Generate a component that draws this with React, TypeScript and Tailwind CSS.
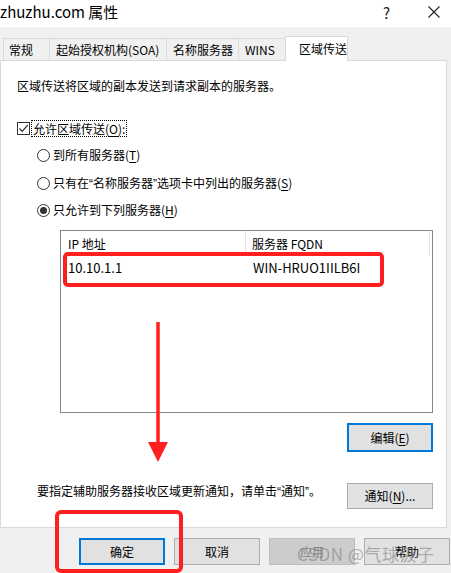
import { FC, ReactNode } from 'react';

const font = { fontFamily: '"Noto Sans CJK SC", "Noto Sans", sans-serif' };
const latin = { fontFamily: '"Liberation Sans", sans-serif' };

const Key: FC<{ k: string }> = ({ k }) => <span className="underline underline-offset-2">{k}</span>;

const Q: FC<{ c: string }> = ({ c }) => <span style={latin}>{c}</span>;

const Radio: FC<{ checked?: boolean; children: ReactNode }> = ({ checked, children }) => {
  return <div className="flex items-center h-[16px] ml-[36px]">
    <div className="w-[13px] h-[13px] rounded-full border border-[#333] bg-white flex items-center justify-center">
      {checked && <div className="w-[7px] h-[7px] rounded-full bg-[#333]" />}
    </div>
    <div className="ml-[3px] leading-[16px]">{children}</div>
  </div>;
};

const Btn: FC<{ children: ReactNode; primary?: boolean; disabled?: boolean; className?: string }> = props => {
  const { children, primary, disabled, className } = props;
  let cls = 'border border-[#adadad] bg-[#e1e1e1] text-black';
  if (primary) cls = 'border-2 border-[#0078d7] bg-[#e1e1e1] text-black';
  if (disabled) cls = 'border border-[#bfbfbf] bg-[#cccccc] text-[#838383]';
  return <div className={`flex items-center justify-center w-[86px] text-[12px] ${cls} ${className ?? ''}`}>{children}</div>;
};

const tabs = [
  { label: '常规', w: 'w-[46px]' },
  { label: '起始授权机构(SOA)', w: 'w-[117px]' },
  { label: '名称服务器', w: 'w-[72px]' },
  { label: 'WINS', w: 'w-[47px]' },
];

const App: FC = () => {
  return <div className="relative w-[451px] h-[573px] overflow-hidden bg-[#f0f0f0] text-[12px] text-black" style={font}>
    {/* title bar */}
    <div className="h-[27px] bg-white flex items-center relative">
      <div className="text-[15px] leading-[20px] -mt-[3px]">zhuzhu.com 属性</div>
      <div className="absolute left-[383px] top-[2px] text-[15px] text-[#222]">?</div>
      <svg className="absolute left-[428px] top-[6px]" width="12" height="12" viewBox="0 0 12 12">
        <path d="M0.5 0.5 L11.5 11.5 M11.5 0.5 L0.5 11.5" stroke="#222" strokeWidth="1.1" />
      </svg>
    </div>

    {/* tabs */}
    <div className="flex items-end h-[33px] pl-[3px]">
      {tabs.map((t, i) => {
        return <div key={i} className={`${t.w} h-[22px] border-t border-l border-[#d9d9d9] flex items-center leading-[16px] ${i == 0 ? 'pl-[5px]' : 'pl-[6px]'}`}>{t.label}</div>;
      })}
      <div className="w-[63px] h-[25px] -mb-[1px] bg-white border-t border-l border-r border-[#d9d9d9] flex items-center pl-[13px] leading-[16px] relative z-10">区域传送</div>
    </div>

    {/* panel */}
    <div className="w-[447px] h-[468px] bg-white border border-[#d9d9d9] flex flex-col">
      <div className="mt-[17px] ml-[16px] h-[16px] leading-[16px]">区域传送将区域的副本发送到请求副本的服务器。</div>

      <div className="mt-[26px] ml-[16px] h-[17px] flex items-center">
        <div className="w-[13px] h-[13px] border border-[#333] bg-white flex items-center justify-center">
          <svg width="11" height="11" viewBox="0 0 11 11">
            <path d="M1.5 5.5 L4.2 8.3 L9.8 2" stroke="#333" strokeWidth="1.2" fill="none" />
          </svg>
        </div>
        <div className="ml-[1px] px-[1px] h-[17px] leading-[16px] border border-dotted border-black">允许区域传送(<Key k="O" />):</div>
      </div>

      <div className="mt-[10px]"><Radio>到所有服务器(<Key k="T" />)</Radio></div>
      <div className="mt-[12px]"><Radio>只有在<Q c="“" />名称服务器<Q c="”" />选项卡中列出的服务器(<Key k="S" />)</Radio></div>
      <div className="mt-[11px]"><Radio checked>只允许到下列服务器(<Key k="H" />)</Radio></div>

      {/* list */}
      <div className="mt-[12px] ml-[59px] w-[373px] h-[183px] border border-[#828790] bg-white">
        <div className="flex h-[25px] leading-[16px]">
          <div className="w-[185px] border-r border-[#e5e5e5] pl-[7px] flex items-center">IP 地址</div>
          <div className="w-[184px] border-r border-[#e5e5e5] pl-[6px] flex items-center">服务器 FQDN</div>
        </div>
        <div className="flex h-[24px] items-center leading-[16px] text-[13px]">
          <div className="w-[185px] pl-[7px]">10.10.1.1</div>
          <div className="pl-[7px]">WIN-HRUO1IILB6I</div>
        </div>
      </div>

      <div className="mt-[10px] flex justify-end pr-[13px]">
        <Btn primary className="h-[29px]">编辑(<Key k="E" />)</Btn>
      </div>

      <div className="mt-[31px] flex items-start pr-[13px]">
        <div className="ml-[36px] leading-[16px] flex-1">要指定辅助服务器接收区域更新通知，请单击<Q c="“" />通知<Q c="”" />。</div>
        <Btn className="h-[26px]">通知(<Key k="N" />)...</Btn>
      </div>
    </div>

    {/* dialog buttons */}
    <div className="flex mt-[10px] pl-[79px] gap-[9px]">
      <Btn primary className="h-[27px]">确定</Btn>
      <Btn className="h-[27px]">取消</Btn>
      <Btn disabled className="h-[27px]">应用</Btn>
      <Btn className="h-[27px]">帮助</Btn>
    </div>

    {/* annotations */}
    <div className="absolute left-[63px] top-[252px] w-[321px] h-[35px] border-[4px] border-[#ff1f1f] rounded-[5px]" />
    <svg className="absolute left-[146px] top-[320px]" width="24" height="144" viewBox="0 0 24 144">
      <path d="M12 2 L12 124" stroke="#ff1f1f" strokeWidth="3.5" />
      <path d="M2 122 L22 122 L12 142 Z" fill="#ff1f1f" />
    </svg>
    <div className="absolute left-[55px] top-[510px] w-[128px] h-[63px] border-[4px] border-[#ff1f1f] rounded-[6px]" />
    <div className="absolute left-[297px] top-[541px] text-[17px] text-[rgba(120,120,120,0.55)] tracking-[0.5px]">CSDN @气球汲子</div>
  </div>;
};

export default App;
